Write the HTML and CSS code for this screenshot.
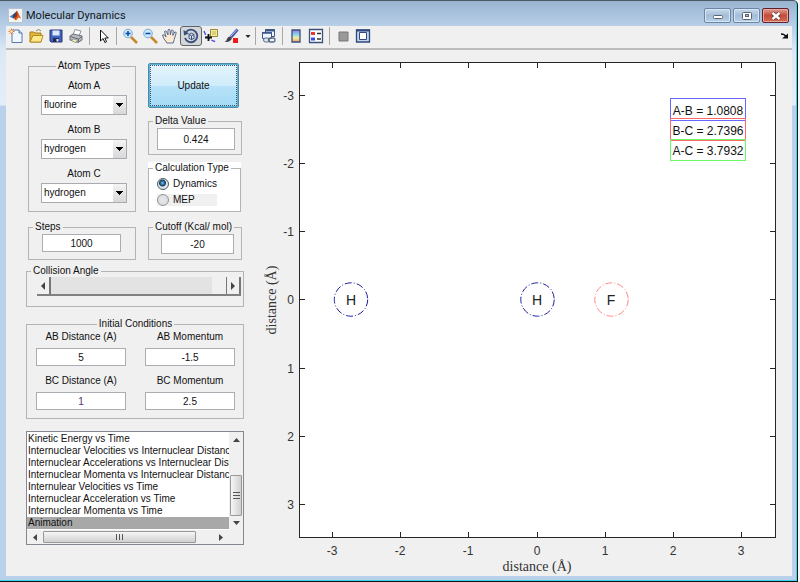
FILE: index.html
```html
<!DOCTYPE html>
<html lang="en">
<head>
<meta charset="utf-8">
<title>Molecular Dynamics</title>
<link rel="stylesheet" href="styles.css">
</head>
<body>
<div class="window">
  <header class="titlebar">
    <svg class="app-icon" width="15" height="15" viewBox="0 0 15 15"><rect x=".5" y=".5" width="14" height="14" fill="#f4f4f4" stroke="#b8c4d0"/><path d="M1.500 8.500l3.500-2 2 2-2 2z" fill="#4a80b8"/><path d="M5 6.500L9 3l-1.500 6L5 10.500z" fill="#284878"/><path d="M9 2.500l4 8-2.500-1L8 12.500 5.500 10.500l2-1z" fill="#e0601c"/><path d="M9 2.500l.5 4.500L7.500 11 6.500 9z" fill="#a02c10"/></svg>
    <h1>Molecular Dynamics</h1>
    <div class="window-buttons">
      <button class="win" aria-label="Minimize"><svg width="12" height="10" viewBox="0 0 12 10"><rect x="1.500" y="4.500" width="9" height="3" rx="1" fill="#fff" stroke="#5a6470"/></svg></button>
      <button class="win" aria-label="Maximize"><svg width="12" height="10" viewBox="0 0 12 10"><rect x="1.500" y="1.500" width="9" height="7" rx="1" fill="#fff" stroke="#5a6470"/><rect x="4.500" y="3.500" width="3" height="2" fill="#a8c0d8" stroke="#5a6470"/></svg></button>
      <button class="win close" aria-label="Close"><svg width="12" height="10" viewBox="0 0 12 10"><path d="M2.500 2l7 6M9.500 2l-7 6" stroke="#5d3a40" stroke-width="4"/><path d="M2.500 2l7 6M9.500 2l-7 6" stroke="#fff" stroke-width="2.400"/></svg></button>
    </div>
  </header>

  <nav class="toolbar" aria-label="Figure toolbar">
    <button class="tool" aria-label="New figure"><svg viewBox="0 0 18 18"><path d="M5 3h7l3 3v9.500H5z" fill="#f2f7ff" stroke="#5779ad"/><path d="M12 3v3h3" fill="#c8d8f0" stroke="#5779ad"/><path d="M4.500 1.500v6M1.500 4.500h6M2.500 2.500l4 4M6.500 2.500l-4 4" stroke="#e07840"/><circle cx="4.500" cy="4.500" r="1.300" fill="#fff0a0"/></svg></button>
    <button class="tool" aria-label="Open file"><svg viewBox="0 0 18 18"><path d="M3 15V5h4l1 1h6v9z" fill="#e0b83c" stroke="#a87c18"/><path d="M3 15l3-6.500h10L14 15z" fill="#ffe98a" stroke="#b88c20"/><path d="M9 4q3-3 5 0" fill="none" stroke="#9a8040"/></svg></button>
    <button class="tool" aria-label="Save figure"><svg viewBox="0 0 18 18"><path d="M3 3h12v12H4l-1-1z" fill="#4060c0" stroke="#24347c"/><path d="M5.500 3.500h7v5h-7z" fill="#dce8fa"/><path d="M6 11h6v4H6z" fill="#202c58"/><path d="M9.500 12h2v2.500h-2z" fill="#f0f0f0"/></svg></button>
    <button class="tool" aria-label="Print figure"><svg viewBox="0 0 18 18"><path d="M6 8l2-5.500 6 1.500-2 5z" fill="#fff" stroke="#8894a0"/><path d="M3 9l3-2 9 2v4l-4 2.500-8-2.500z" fill="#b8bcc2" stroke="#686e78"/><path d="M3.500 9.500l8 2.500 3.500-2.500M11.500 12v3" fill="none" stroke="#646a74"/><path d="M4 13l3-1 4 1.500-3 2z" fill="#f8f0b8" stroke="#84847c" stroke-width=".7"/></svg></button>
    <span class="sep"></span>
    <button class="tool" aria-label="Edit plot"><svg viewBox="0 0 18 18"><path d="M6.500 3v11l2.600-2.500 1.800 4 1.700-.8-1.800-3.700h3.500z" fill="#fff" stroke="#111"/></svg></button>
    <span class="sep"></span>
    <button class="tool" aria-label="Zoom in"><svg viewBox="0 0 18 18"><path d="M10 10l6 6" stroke="#c88828" stroke-width="2.500"/><circle cx="7" cy="6.500" r="4.300" fill="#c8eaff" stroke="#78a8d0"/><path d="M4.500 6.500h5M7 4v5" stroke="#1048a0" stroke-width="1.500"/></svg></button>
    <button class="tool" aria-label="Zoom out"><svg viewBox="0 0 18 18"><path d="M10 10l6 6" stroke="#c88828" stroke-width="2.500"/><circle cx="7" cy="6.500" r="4.300" fill="#c8eaff" stroke="#78a8d0"/><path d="M4.500 6.500h5" stroke="#1048a0" stroke-width="1.500"/></svg></button>
    <button class="tool" aria-label="Pan"><svg viewBox="0 0 18 18"><path d="M6 16L2.500 11 1.500 8q1.500-1 2.800 1L5 10 3.500 4.500Q5 3 5.700 5L7 8V3q1.200-1.800 2 0l.4 4.800 1-4.500q1.500-1 1.800.5L11.800 8.500l2-3.500q1.500-.3 1.400 1l-2 6.500-1 3.500z" fill="#ffe9d0" stroke="#46608c" stroke-width=".9"/></svg></button>
    <button class="tool active" aria-label="Rotate 3D" aria-pressed="true"><svg viewBox="0 0 18 18"><path d="M4 5a6.300 6.300 0 1 1-1 6" fill="none" stroke="#38507c" stroke-width="1.900"/><path d="M1.500 3l.5 5.500 5-2z" fill="#38507c"/><path d="M7 7.500l2.500-1.300L12 7.500v3.800l-2.500 1.300L7 11.300z" fill="#dce6f5" stroke="#38507c"/><path d="M7 7.500l2.500 1.300L12 7.500M9.500 9v3.500" fill="none" stroke="#38507c"/></svg></button>
    <button class="tool" aria-label="Data cursor"><svg viewBox="0 0 18 18"><path d="M1 4q3 9 13 11" fill="none" stroke="#4848e0" stroke-width="1.300" stroke-dasharray="4 2"/><path d="M7.500 2.500h7v7h-7z" fill="#f8ef9a" stroke="#94883c"/><path d="M9 5h4M9 7h4" stroke="#b8ac60"/><path d="M2 10.500h7M5.500 7v7" stroke="#111" stroke-width="1.800"/></svg></button>
    <button class="tool" aria-label="Brush data"><svg viewBox="0 0 18 18"><path d="M14.500 2.500L8 10" stroke="#4858a8" stroke-width="3"/><path d="M14 2.500L8 9" stroke="#b8c8f0"/><path d="M1.500 15q2-1 3-4Q6 8.500 8.500 10q1 2-1 3.500-2 1.800-6 1.500z" fill="#40404c"/><path d="M10 11h5v5h-5z" fill="#f01818"/></svg></button>
    <button class="drop" aria-label="Brush colors"><svg viewBox="0 0 8 18"><path d="M1.500 8h5L4 11z" fill="#222"/></svg></button>
    <span class="sep"></span>
    <button class="tool" aria-label="Link plots"><svg viewBox="0 0 18 18"><path d="M5.500 2.500h9v7h-9z" fill="#f0f5ff" stroke="#3c5888"/><path d="M5 3.500h10" stroke="#3c5888" stroke-width="2"/><path d="M2.500 5.500h9v6h-9z" fill="#f0f5ff" stroke="#3c5888"/><path d="M2 6h10" stroke="#3c5888" stroke-width="1.500"/><rect x="3.500" y="11" width="6" height="4" rx="2" fill="#dce4ee" stroke="#586c88"/><rect x="8.500" y="11" width="6.500" height="4" rx="2" fill="none" stroke="#586c88" stroke-width="1.300"/></svg></button>
    <span class="sep"></span>
    <button class="tool" aria-label="Insert colorbar"><svg viewBox="0 0 18 18"><defs><linearGradient id="bar" x2="0" y2="1"><stop stop-color="#a078e0"/><stop offset=".35" stop-color="#80d0f0"/><stop offset=".65" stop-color="#f0f0a0"/><stop offset="1" stop-color="#f09868"/></linearGradient></defs><path d="M5 3h8v12H5z" fill="url(#bar)" stroke="#38507c" stroke-width="1.300"/></svg></button>
    <button class="tool" aria-label="Insert legend"><svg viewBox="0 0 18 18"><path d="M2.500 2.500h13v13h-13z" fill="#fff" stroke="#38507c" stroke-width="1.300"/><path d="M4 5h4v3H4z" fill="#e83838"/><path d="M4 10.500h4v3H4z" fill="#3c48e0"/><path d="M10 6.500h4M10 12h4" stroke="#333" stroke-width="1.300"/></svg></button>
    <span class="sep"></span>
    <button class="tool" aria-label="Hide plot tools"><svg viewBox="0 0 18 18"><path d="M5 5h9v9H5z" fill="#999" stroke="#777"/></svg></button>
    <button class="tool" aria-label="Show plot tools"><svg viewBox="0 0 18 18"><path d="M2.500 3h13v12h-13z" fill="#c5d5ee" stroke="#30487c" stroke-width="1.300"/><path d="M2 3.500h14" stroke="#30487c" stroke-width="2"/><path d="M5.500 5.500h7v7h-7z" fill="#fff" stroke="#30487c"/></svg></button>
    <button class="tool dock" aria-label="Dock figure"><svg viewBox="0 0 18 18"><path d="M8 7q4 0 5 3" fill="none" stroke="#111" stroke-width="1.500"/><path d="M9 11.500h6V6.500z" fill="#111"/></svg></button>
  </nav>

  <main class="figure">
    <form class="controls">
      <div class="pair">
        <fieldset class="panel atoms">
          <legend>Atom Types</legend>
          <div class="field"><label for="atom-a">Atom A</label><select id="atom-a"><option>fluorine</option></select></div>
          <div class="field"><label for="atom-b">Atom B</label><select id="atom-b"><option>hydrogen</option></select></div>
          <div class="field"><label for="atom-c">Atom C</label><select id="atom-c"><option>hydrogen</option></select></div>
        </fieldset>
        <div class="stack">
          <button type="button" class="update">Update</button>
          <fieldset class="panel single">
            <legend id="delta">Delta Value</legend>
            <input type="text" value="0.424" aria-labelledby="delta">
          </fieldset>
          <div class="white">
            <fieldset class="panel calc">
              <legend>Calculation Type</legend>
              <label><input type="radio" name="calc" checked>Dynamics</label>
              <label class="shaded"><input type="radio" name="calc">MEP</label>
            </fieldset>
          </div>
        </div>
      </div>

      <div class="pair">
        <fieldset class="panel single steps">
          <legend id="steps">Steps</legend>
          <input type="text" value="1000" aria-labelledby="steps">
        </fieldset>
        <fieldset class="panel single cutoff">
          <legend id="cutoff">Cutoff (Kcal/ mol)</legend>
          <input type="text" value="-20" aria-labelledby="cutoff">
        </fieldset>
      </div>

      <fieldset class="panel angle">
        <legend id="angle">Collision Angle</legend>
        <div class="slider">
          <button type="button" aria-label="Decrease angle"><svg width="6" height="8" viewBox="0 0 6 8"><path d="M5 0v8L1 4z" fill="#444"/></svg></button>
          <input type="range" min="0" max="180" value="180" aria-labelledby="angle">
          <button type="button" aria-label="Increase angle"><svg width="6" height="8" viewBox="0 0 6 8"><path d="M1 0v8l4-4z" fill="#444"/></svg></button>
        </div>
      </fieldset>

      <fieldset class="panel initial">
        <legend>Initial Conditions</legend>
        <div class="field"><label for="ab-d">AB Distance (A)</label><input id="ab-d" type="text" value="5"></div>
        <div class="field"><label for="ab-m">AB Momentum</label><input id="ab-m" type="text" value="-1.5"></div>
        <div class="field"><label for="bc-d">BC Distance (A)</label><input id="bc-d" class="edited" type="text" value="1"></div>
        <div class="field"><label for="bc-m">BC Momentum</label><input id="bc-m" type="text" value="2.5"></div>
      </fieldset>

      <div class="list">
        <select size="8" aria-label="Plot type">
          <option>Kinetic Energy vs Time</option>
          <option>Internuclear Velocities vs Internuclear Distance</option>
          <option>Internuclear Accelerations vs Internuclear Distance</option>
          <option>Internuclear Momenta vs Internuclear Distance</option>
          <option>Internulear Velocities vs Time</option>
          <option>Internuclear Acceleration vs Time</option>
          <option>Internuclear Momenta vs Time</option>
          <option selected>Animation</option>
        </select>
        <div class="vbar">
          <svg width="7" height="4" viewBox="0 0 7 4"><path d="M0 4h7L3.500 0z" fill="#444"/></svg>
          <span class="thumb"><svg width="7" height="8" viewBox="0 0 7 8"><path d="M0 .5h7M0 3.500h7M0 6.500h7" stroke="#555"/></svg></span>
          <svg width="7" height="4" viewBox="0 0 7 4"><path d="M0 0h7L3.500 4z" fill="#444"/></svg>
        </div>
        <div class="hbar">
          <svg width="4" height="7" viewBox="0 0 4 7"><path d="M4 0v7L0 3.500z" fill="#444"/></svg>
          <span class="thumb"><svg width="8" height="6" viewBox="0 0 8 6"><path d="M.5 0v6M3.500 0v6M6.500 0v6" stroke="#555"/></svg></span>
          <svg width="4" height="7" viewBox="0 0 4 7"><path d="M0 0v7l4-3.500z" fill="#444"/></svg>
        </div>
      </div>
    </form>

    <svg class="plot" viewBox="256 50 536 525" role="img" aria-label="Atom positions">
      <rect x="299.500" y="62.500" width="476" height="475" fill="#fff" stroke="#262626"/>
      <path class="axis" d="M332.500 537v-5M400.500 537v-5M468.500 537v-5M537.500 537v-5M605.500 537v-5M673.500 537v-5M741.500 537v-5M332.500 63v5M400.500 63v5M468.500 63v5M537.500 63v5M605.500 63v5M673.500 63v5M741.500 63v5"/>
      <path class="axis" d="M300 95.500h5M300 163.500h5M300 231.500h5M300 299.500h5M300 368.500h5M300 436.500h5M300 504.500h5M775 95.500h-5M775 163.500h-5M775 231.500h-5M775 299.500h-5M775 368.500h-5M775 436.500h-5M775 504.500h-5"/>
      <g class="ticks">
        <text x="332" y="555">-3</text><text x="400" y="555">-2</text><text x="468" y="555">-1</text><text x="537" y="555">0</text><text x="605" y="555">1</text><text x="673" y="555">2</text><text x="741" y="555">3</text>
      </g>
      <g class="ticks left">
        <text x="294" y="100">-3</text><text x="294" y="168">-2</text><text x="294" y="236">-1</text><text x="294" y="304">0</text><text x="294" y="373">1</text><text x="294" y="441">2</text><text x="294" y="509">3</text>
      </g>
      <text class="axis-label" x="537" y="571">distance (Å)</text>
      <text class="axis-label" transform="translate(276 300) rotate(-90)">distance (Å)</text>
      <g class="atom">
        <circle cx="351" cy="299.500" r="16.700" stroke="#2020a0"/><text x="351" y="305">H</text>
        <circle cx="537.500" cy="299.500" r="16.700" stroke="#2020a0"/><text x="537" y="305">H</text>
        <circle cx="611.500" cy="299.500" r="16.700" stroke="#ff8888"/><text x="611" y="305">F</text>
      </g>
      <g class="readout">
        <rect x="670.500" y="98.500" width="75" height="22" stroke="#6868ff"/>
        <rect x="670.500" y="118.500" width="75" height="22" stroke="#ff6868"/>
        <rect x="670.500" y="139.500" width="75" height="21" stroke="#68f868"/>
        <text x="708" y="115">A-B = 1.0808</text><text x="708" y="135">B-C = 2.7396</text><text x="708" y="155">A-C = 3.7932</text>
      </g>
    </svg>
  </main>
</div>
</body>
</html>
```
FILE: styles.css
```css
* { box-sizing: border-box; }
body {
  margin: 0;
  padding-right: 2px;
  background: #f4f4f4;
  font: 10px/12px "Liberation Sans", Arial, sans-serif;
  color: #111;
}
button, input, select { font: inherit; color: inherit; margin: 0; padding: 0; border-radius: 0; }
svg { display: block; }

.window {
  display: flex;
  flex-direction: column;
  min-height: 100vh;
  padding: 0 5px 5px 6px;
  background: linear-gradient(#99b3d0 0, #b9d0e8 26px, #dce8f5 50px, #e4eef8 104px, #b9d1ea 105px);
  border-top: 1px solid #4c5864;
  border-right: 1px solid #111;
  border-bottom: 1px solid #111;
  border-top-right-radius: 5px;
  box-shadow: inset -1px -1px 0 #38d4ee;
}

.titlebar { display: flex; align-items: center; height: 25px; padding: 4px 3px 0 2px; gap: 3px; }
.titlebar h1 { margin: 0; font: 11px/16px Roboto, sans-serif; color: #101820; }
.window-buttons { display: flex; gap: 2px; margin-left: auto; }
.win {
  display: grid;
  place-items: center;
  width: 27px;
  height: 15px;
  border: 1px solid #6a86a4;
  border-radius: 2px;
  background: linear-gradient(#c8daec, #a4bdd8 50%, #b8d0e8);
  box-shadow: inset 0 0 0 1px #d8e6f4;
}
.win.close { border-color: #60202c; background: linear-gradient(#e0a094, #c44c38 50%, #d46c54); box-shadow: inset 0 0 0 1px #e8a8a0; }

.toolbar {
  display: flex;
  align-items: center;
  height: 24px;
  padding: 0 0 3px;
  background: #f0f0f0;
  border-bottom: 2px solid #bcbcbc;
}
.tool { width: 20px; height: 20px; border: 0; background: none; }
.tool svg { width: 18px; height: 18px; margin: 0 auto; }
.tool.active { width: 22px; border: 1px solid #606468; border-radius: 3px; background: #d4d6d8; }
.drop { width: 10px; height: 20px; border: 0; background: none; }
.drop svg { width: 8px; height: 18px; margin-left: auto; }
.sep { width: 1px; height: 18px; margin: 0 3px; background: #a8a8a8; }
.dock { margin-left: auto; }

.figure { flex: 1; display: grid; grid-template-columns: 250px 1fr; align-items: start; background: #f0f0f0; }
.controls { display: flex; flex-direction: column; padding: 10px 12px 0 20px; }
.plot { width: 100%; }

.pair { display: grid; grid-template-columns: 108px 94px; gap: 12px; padding-left: 2px; margin-bottom: 9px; }
.pair + .angle { margin-top: -4px; }
.panel {
  --inset: 8px;
  min-width: 0;
  margin: 0;
  padding: 0 8px 0 var(--inset);
  border: 1px solid #b4b4b4;
}
.panel legend { margin-left: calc(4px - var(--inset)); padding: 0 2px; line-height: 12px; white-space: nowrap; }
.field { display: flex; flex-direction: column; text-align: center; }

.atoms { --inset: 12px; display: flex; flex-direction: column; padding-top: 8px; padding-bottom: 7px; }
.panel.atoms legend, .panel.initial legend { margin: 0 auto; }
.atoms .field { gap: 3px; margin-bottom: 9px; }
.atoms .field:last-child { margin-bottom: 0; }
.atoms select {
  height: 20px;
  padding-left: 2px;
  border: 1px solid #aaaab0;
  appearance: none;
  background:
    linear-gradient(#000, #000) right 3px top 7px / 7px 1px no-repeat,
    linear-gradient(#000, #000) right 4px top 8px / 5px 1px no-repeat,
    linear-gradient(#000, #000) right 5px top 9px / 3px 1px no-repeat,
    linear-gradient(#000, #000) right 6px top 10px / 1px 1px no-repeat,
    linear-gradient(#f4f4f4, #d8d8d8) right / 13px 100% no-repeat,
    #fff;
}

.stack { display: flex; flex-direction: column; gap: 7px; padding-top: 3px; }
.update {
  height: 45px;
  margin-right: 3px;
  border: 1px solid #5088a8;
  border-radius: 2px;
  background: linear-gradient(#e4f4fc, #d0ecfa 50%, #b8e2f8 51%, #a4daf6);
  box-shadow: inset 0 0 0 1px #58b4d8;
  outline: 1px dotted #456;
  outline-offset: -3px;
}
input[type="text"] { width: 100%; height: 18px; border: 1px solid #abadb3; background: #fff; text-align: center; }
.edited { color: #603070; }
.single { padding-top: 1px; padding-right: 6px; padding-bottom: 4px; }
.single input[type="text"] { display: block; height: 22px; }
.steps { --inset: 13px; padding-right: 14px; padding-bottom: 7px; }
.steps input[type="text"] { height: 18px; }
.cutoff { --inset: 12px; padding-right: 7px; padding-bottom: 5px; }
.cutoff input[type="text"] { height: 20px; }

.white { background: #fff; margin-right: 1px; }
.calc { padding: 2px 0 3px var(--inset); }
.calc label { display: flex; align-items: center; gap: 4px; height: 16px; }
.calc .shaded { width: 60px; height: 12px; margin: 2px 0; background: #f0f0f0; }
.calc input {
  width: 12px;
  height: 12px;
  border: 1px solid #90969c;
  border-radius: 50%;
  appearance: none;
  background: radial-gradient(#e8e8e8, #d4d8dc);
}
.calc input:checked { border-color: #4c5864; background: radial-gradient(circle at 45% 40%, #70c8f0 0, #103858 3px, #dfe6ec 4px); }

.angle { --inset: 10px; margin-bottom: 11px; padding-right: 2px; padding-bottom: 10px; }
.slider { display: flex; height: 19px; border-bottom: 2px solid #808080; }
.slider button { display: grid; place-items: center; width: 14px; border: 0; border-right: 2px solid #777; background: #f0f0f0; }
.slider input { flex: 1; min-width: 0; appearance: none; background: #e3e3e3; }
.slider input::-webkit-slider-thumb { width: 15px; height: 17px; appearance: none; background: #f0f0f0; border-right: 1px solid #777; }

.initial { --inset: 9px; display: grid; grid-template-columns: 1fr 1fr; gap: 9px 19px; margin-bottom: 12px; padding-top: 1px; padding-bottom: 8px; }
.initial .field { gap: 5px; }

.list {
  display: grid;
  grid-template-columns: minmax(0, 1fr) 14px;
  grid-template-rows: 98px 14px;
  border: 1px solid #828790;
  background: #fff;
}
.list select {
  width: 100%;
  height: 98px;
  padding-top: 1px;
  border: 0;
  outline: 0;
  overflow: hidden;
  background: #fff;
  scrollbar-width: none;
}
.list option { height: 12px; min-height: 12px; padding: 0 1px; line-height: 12px; color: #111; }
.list option:checked { color: #111; background: linear-gradient(#a8a8a8, #a8a8a8); }
.vbar, .hbar { display: flex; align-items: center; background: #f0f0f0; }
.vbar { flex-direction: column; padding: 6px 0 5px; }
.hbar { grid-column: 1 / -1; padding: 0 20px 0 6px; }
.thumb { display: grid; place-items: center; border: 1px solid #989898; border-radius: 1px; }
.vbar .thumb { width: 12px; height: 41px; margin: auto 0 5px; background: linear-gradient(90deg, #f6f6f6, #d0d0d0); }
.hbar .thumb { width: 153px; height: 12px; margin: 0 auto 0 6px; background: linear-gradient(#f6f6f6, #d0d0d0); }

.axis { fill: none; stroke: #262626; }
.ticks { font-size: 12px; fill: #333; text-anchor: middle; }
.ticks.left { text-anchor: end; }
.axis-label { font: 14px "Liberation Serif", "Times New Roman", serif; fill: #333; text-anchor: middle; }
.atom { font-size: 14px; text-anchor: middle; fill: #222; }
.atom circle { fill: none; stroke-dasharray: 7 2 1 2; }
.readout { font-size: 12px; text-anchor: middle; fill: #111; }
.readout rect { fill: none; }
```
